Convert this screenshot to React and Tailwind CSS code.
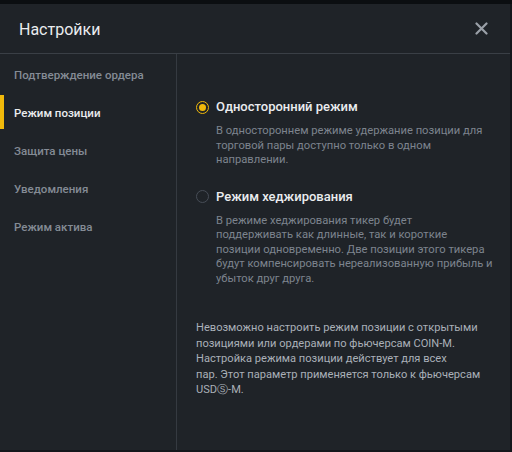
import { useState } from "react";

const menu = [
    "Подтверждение ордера",
    "Режим позиции",
    "Защита цены",
    "Уведомления",
    "Режим актива",
];

const modes = [
    {
        id: "one-way",
        title: "Односторонний режим",
        lines: [
            "В одностороннем режиме удержание позиции для",
            "торговой пары доступно только в одном",
            "направлении.",
        ],
    },
    {
        id: "hedge",
        title: "Режим хеджирования",
        lines: [
            "В режиме хеджирования тикер будет",
            "поддерживать как длинные, так и короткие",
            "позиции одновременно. Две позиции этого тикера",
            "будут компенсировать нереализованную прибыль и",
            "убыток друг друга.",
        ],
    },
];

const note = [
    "Невозможно настроить режим позиции с открытыми",
    "позициями или ордерами по фьючерсам COIN-M.",
    "Настройка режима позиции действует для всех",
    "пар. Этот параметр применяется только к фьючерсам",
    "USDⓈ-M.",
];

const Radio = ({ checked }) =>
    checked ? (
        <span className="flex h-[13px] w-[13px] shrink-0 items-center justify-center rounded-full border-[1.5px] border-[#f0b90b]">
            <span className="h-[7px] w-[7px] rounded-full bg-[#f0b90b]" />
        </span>
    ) : (
        <span className="h-[13px] w-[13px] shrink-0 rounded-full border-[1.5px] border-[#474d57]" />
    );

export default function App() {
    const [active, setActive] = useState(1);
    const [mode, setMode] = useState("one-way");

    return (
        <div
            className="flex h-[452px] w-[512px] flex-col overflow-hidden bg-[#0b0e11]"
            style={{ fontFamily: "Roboto, 'Noto Sans', sans-serif" }}
        >
            <div className="h-[4px] shrink-0" />

            <div className="flex flex-1 flex-col border-b-2 border-r-2 border-[#14171b] bg-[#1f2328]">
                {/* Header */}
                <div className="flex h-[50px] shrink-0 items-center justify-between border-b border-[#3a3f46] pl-[19px] pr-[22px]">
                    <h1 className="mt-[2px] text-[16px] font-normal text-[#eaecef]">
                        Настройки
                    </h1>
                    <svg
                        width="13"
                        height="13"
                        viewBox="0 0 13 13"
                        className="text-[#9aa0a8]"
                    >
                        <path
                            d="M1.5 1.5L11.5 11.5M11.5 1.5L1.5 11.5"
                            stroke="currentColor"
                            strokeWidth="2.2"
                            strokeLinecap="round"
                        />
                    </svg>
                </div>

                <div className="flex flex-1">
                    {/* Sidebar */}
                    <div className="w-[177px] shrink-0 border-r border-[#353a41] pt-[3px]">
                        {menu.map((item, i) => (
                            <button
                                key={item}
                                onClick={() => setActive(i)}
                                className={`relative flex h-[38px] w-full items-center pl-[14px] text-left text-[11.5px] font-medium ${
                                    active === i
                                        ? "text-[#eaecef]"
                                        : "text-[#848b95]"
                                }`}
                            >
                                {active === i && (
                                    <span className="absolute left-0 top-0 h-[34px] w-[4px] bg-[#f0b90b]" />
                                )}
                                {item}
                            </button>
                        ))}
                    </div>

                    {/* Position mode */}
                    <div className="flex-1 pl-[19px] pt-[43px]">
                        {modes.map((m, i) => (
                            <div
                                key={m.id}
                                className={i > 0 ? "mt-[19px]" : ""}
                            >
                                <button
                                    onClick={() => setMode(m.id)}
                                    className="flex h-[20px] items-center gap-[7px]"
                                >
                                    <Radio checked={mode === m.id} />
                                    <span className="text-[13px] font-medium text-[#eaecef]">
                                        {m.title}
                                    </span>
                                </button>
                                <div className="mt-[7px] pl-[20px] text-[11.2px] leading-[14.5px] text-[#7d848e]">
                                    {m.lines.map((l) => (
                                        <div
                                            key={l}
                                            className="whitespace-nowrap"
                                        >
                                            {l}
                                        </div>
                                    ))}
                                </div>
                            </div>
                        ))}

                        <div className="mt-[34px] text-[11.1px] leading-[15.5px] text-[#aab0b8]">
                            {note.map((l) => (
                                <div key={l} className="whitespace-nowrap">
                                    {l}
                                </div>
                            ))}
                        </div>
                    </div>
                </div>
            </div>
        </div>
    );
}
